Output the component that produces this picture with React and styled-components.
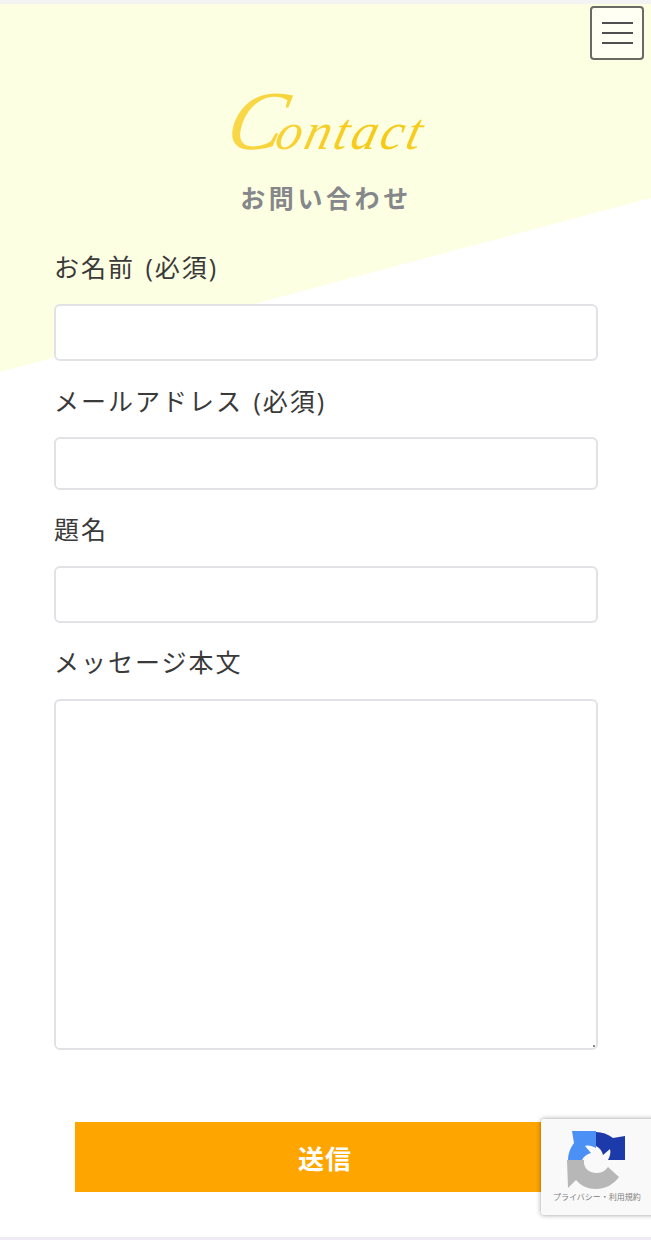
import styled, { createGlobalStyle } from "styled-components";

const GlobalStyle = createGlobalStyle`
  html, body {
    margin: 0;
    padding: 0;
    background: #fff;
    font-family: "Open Sans", "Noto Sans CJK JP", sans-serif;
  }
`;

const Page = styled.div`
  width: 651px;
  height: 1240px;
  overflow: hidden;
  position: relative;
  background: #fff;
  border-top: 4px solid #f3f3f3;
  border-bottom: 3px solid #eeebf4;
  box-sizing: border-box;
`;

const Backdrop = styled.div`
  position: absolute;
  left: 0;
  top: 0;
  width: 651px;
  height: 368px;
  background: #fdffe3;
  clip-path: polygon(0 0, 100% 0, 100% 194px, 0 100%);
`;

const MenuButton = styled.button`
  position: absolute;
  top: 2px;
  right: 7px;
  width: 54px;
  height: 54px;
  padding: 0;
  box-sizing: border-box;
  background: #fffff4;
  border: 2px solid #6a6a64;
  border-radius: 4px;
  display: flex;
  flex-direction: column;
  align-items: center;
  justify-content: center;
  gap: 8px;
  span {
    display: block;
    width: 31px;
    height: 2px;
    background: #4f4f4f;
  }
`;

const Content = styled.main`
  position: relative;
  display: flex;
  flex-direction: column;
  padding: 83px 53px 0 54px;
`;

const Heading = styled.h1`
  margin: 0;
  height: 92px;
  text-align: center;
  font-family: "Liberation Serif", serif;
  font-style: italic;
  font-weight: 400;
  line-height: 68px;
  color: transparent;
  background: linear-gradient(100deg, #f7cb12 0%, #f9d94e 30%, #f6c915 60%, #fadf6c 100%);
  background-clip: text;
  -webkit-background-clip: text;
  font-size: 52px;
  letter-spacing: 3px;
  transform: skewX(-14deg);
  &::first-letter {
    font-size: 84px;
    letter-spacing: -6px;
  }
`;

const SubHeading = styled.h2`
  margin: 0 0 34px;
  text-align: center;
  font-family: "Noto Sans CJK JP", sans-serif;
  font-weight: 700;
  font-size: 25px;
  line-height: 36px;
  letter-spacing: 3.6px;
  color: #85878a;
`;

const Field = styled.label`
  display: block;
  position: relative;
  margin-bottom: ${(props) => props.gap}px;
`;

const LabelText = styled.span`
  display: block;
  font-size: 25px;
  line-height: 36px;
  letter-spacing: 2px;
  word-spacing: 2px;
  color: #3a3a3a;
  margin-bottom: ${(props) => props.gap}px;
`;

const Input = styled.input`
  display: block;
  box-sizing: border-box;
  width: 100%;
  height: ${(props) => props.h}px;
  background: #fff;
  border: 2px solid #e0e2e6;
  border-radius: 6px;
  padding: 0 12px;
`;

const TextArea = styled.textarea`
  display: block;
  box-sizing: border-box;
  width: 100%;
  height: 351px;
  background: #fff;
  border: 2px solid #e0e2e6;
  border-radius: 6px;
  padding: 12px;
  resize: none;
`;

const ResizeDot = styled.span`
  position: absolute;
  right: 3px;
  bottom: 3px;
  width: 2px;
  height: 2px;
  background: #8a8a8a;
`;

const SubmitButton = styled.button`
  display: block;
  margin: 72px 0 0 21px;
  width: 500px;
  height: 70px;
  background: #ffa500;
  border: none;
  color: #fff;
  font-family: "Noto Sans CJK JP", sans-serif;
  font-weight: 700;
  font-size: 26px;
  letter-spacing: 1px;
`;

const Recaptcha = styled.div`
  position: absolute;
  left: 541px;
  top: 1115px;
  width: 120px;
  height: 96px;
  background: #f9f9f9;
  border-radius: 3px;
  box-shadow: 0 0 5px rgba(0, 0, 0, 0.4);
  padding-left: 12px;
  box-sizing: border-box;
  display: flex;
  flex-direction: column;
  align-items: flex-start;
`;

const RecaptchaLogo = styled.svg`
  display: block;
  margin: 11px 0 0 14px;
  width: 60px;
  height: 60px;
`;

const RecaptchaLinks = styled.div`
  margin-top: 1px;
  font-family: "Noto Sans CJK JP", sans-serif;
  font-size: 8px;
  line-height: 12px;
  white-space: nowrap;
  color: #808080;
`;

const arrow = "M1 30 C1 24 3 18 7 13 L5 1 L29 1 C29 6 29 12 29 18 C25 16 22 15 18 16 L24 23 C20 24 17 26 15 30 Z";

export default function App() {
  return (
    <Page>
      <GlobalStyle />
      <Backdrop />
      <Content>
        <Heading>Contact</Heading>
        <SubHeading>お問い合わせ</SubHeading>
        <Field gap={22}>
          <LabelText gap={19}>お名前 (必須)</LabelText>
          <Input h={57} />
        </Field>
        <Field gap={21}>
          <LabelText gap={18}>メールアドレス (必須)</LabelText>
          <Input h={53} />
        </Field>
        <Field gap={21}>
          <LabelText gap={19}>題名</LabelText>
          <Input h={57} />
        </Field>
        <Field gap={0}>
          <LabelText gap={19}>メッセージ本文</LabelText>
          <TextArea />
          <ResizeDot />
        </Field>
        <SubmitButton>送信</SubmitButton>
      </Content>
      <MenuButton aria-label="menu">
        <span />
        <span />
        <span />
      </MenuButton>
      <Recaptcha>
        <RecaptchaLogo viewBox="0 0 60 60">
          <path d="M0 30 L17 30 C16 37 21 43 30 43 C35 43 39 40 41 37 L52 47 C47 54 39 59 29 59 C21 59 14 56 9 50 L1 58 Z" fill="#b7b7b7" />
          <path d={arrow} fill="#4a90f5" />
          <path d={arrow} fill="#1c3aa9" transform="rotate(90 29 30)" />
        </RecaptchaLogo>
        <RecaptchaLinks>プライバシー・利用規約</RecaptchaLinks>
      </Recaptcha>
    </Page>
  );
}
